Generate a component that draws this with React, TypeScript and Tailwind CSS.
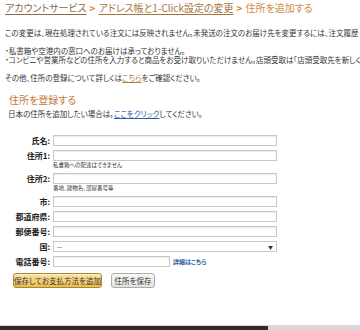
import React from "react";

const jp = "font-['Noto_Sans_CJK_JP','Noto_Sans',sans-serif] [font-feature-settings:'palt']";

function Row({ label, children }: { label: string; children: React.ReactNode }) {
  return (
    <>
      <div className="text-right text-[8px] font-bold text-[#222] leading-[11px] whitespace-nowrap">{label}</div>
      <div className="flex flex-col">{children}</div>
    </>
  );
}

function Input({ w = "w-[224px]" }: { w?: string }) {
  return <div className={`${w} h-[11px] border border-[#c8c8c8] bg-white shadow-[inset_0_1px_1px_rgba(0,0,0,0.08)]`} />;
}

export default function App() {
  return (
    <div className={`w-[360px] h-[330px] overflow-hidden bg-white flex flex-col ${jp} text-[#222]`}>
      <div className="flex-1 overflow-hidden">
        <div className="pl-[5px] pt-[1px] text-[10px] leading-[14px] whitespace-nowrap flex items-center gap-[3px]">
          <span className="text-[#8b6a4a] underline underline-offset-2">アカウントサービス</span>
          <span className="text-[#e08a2c] font-bold">&gt;</span>
          <span className="text-[#a8743e] underline underline-offset-2">アドレス帳と1-Click設定の変更</span>
          <span className="text-[#e08a2c] font-bold">&gt;</span>
          <span className="text-[#d08a46]">住所を追加する</span>
        </div>

        <div className="pl-[5px] mt-[13px] text-[7.5px] leading-[9px] whitespace-nowrap text-[#333]">
          この変更は、現在処理されている注文には反映されません。未発送の注文のお届け先を変更するには、注文履歴
        </div>

        <div className="pl-[5px] mt-[9px] text-[7.5px] leading-[9px] whitespace-nowrap text-[#333]">
          <div>・私書箱や空港内の窓口へのお届けは承っておりません。</div>
          <div>・コンビニや営業所などの住所を入力すると商品をお受け取りいただけません。店頭受取は「店頭受取先を新しく</div>
        </div>

        <div className="pl-[5px] mt-[9px] text-[7.5px] leading-[9px] whitespace-nowrap text-[#333]">
          その他、住所の登録について詳しくは<span className="text-[#b5803f] underline">こちら</span>をご確認ください。
        </div>

        <div className="pl-[9px] mt-[12px] text-[10px] leading-[12px] text-[#c8793a]">住所を登録する</div>
        <div className="pl-[8px] mt-[3px] text-[7.5px] leading-[9px] whitespace-nowrap text-[#333]">
          日本の住所を追加したい場合は，<span className="text-[#2c5aa0] underline">ここをクリック</span>してください。
        </div>

        <div className="mt-[17px] grid grid-cols-[50px_auto] gap-x-[3px] gap-y-[4px] items-start">
          <Row label="氏名:">
            <Input />
          </Row>
          <Row label="住所1:">
            <Input />
            <div className="text-[5.5px] leading-[7px] mt-[1px] text-[#333]">私書箱への配達はできません</div>
          </Row>
          <Row label="住所2:">
            <Input />
            <div className="text-[5.5px] leading-[7px] mt-[1px] text-[#333]">番地、建物名、部屋番号等</div>
          </Row>
          <Row label="市:">
            <Input />
          </Row>
          <Row label="都道府県:">
            <Input />
          </Row>
          <Row label="郵便番号:">
            <Input />
          </Row>
          <Row label="国:">
            <div className="w-[224px] h-[11px] border border-[#c8c8c8] bg-white flex items-center justify-between px-[3px] text-[7px] leading-none">
              <span>--</span>
              <span className="text-[5px] text-[#333]">▼</span>
            </div>
          </Row>
          <Row label="電話番号:">
            <div className="flex items-center gap-[3px]">
              <Input w="w-[117px]" />
              <span className="text-[6px] font-bold text-[#2c5aa0] leading-none">詳細はこちら</span>
            </div>
          </Row>
        </div>

        <div className="pl-[13px] mt-[6px] flex gap-[9px]">
          <button className="w-[89px] h-[15px] rounded-[3px] border border-[#a88734] bg-gradient-to-b from-[#f9e3a7] to-[#eebd45] text-[7.5px] leading-none text-[#333] shadow-[0_1px_0_rgba(255,255,255,0.5)_inset]">
            保存してお支払方法を追加
          </button>
          <button className="w-[44px] h-[15px] rounded-[3px] border border-[#a9adb3] bg-gradient-to-b from-[#f8f8f4] to-[#e2e4da] text-[7.5px] leading-none text-[#333]">
            住所を保存
          </button>
        </div>
      </div>

      <div className="h-[1px] bg-[#ecc8e4]" />
      <div className="h-[4px] flex bg-[#2b2b2b]">
        <div className="w-[268px]" />
        <div className="flex-1 bg-[#d8d8d8]" />
      </div>
    </div>
  );
}
